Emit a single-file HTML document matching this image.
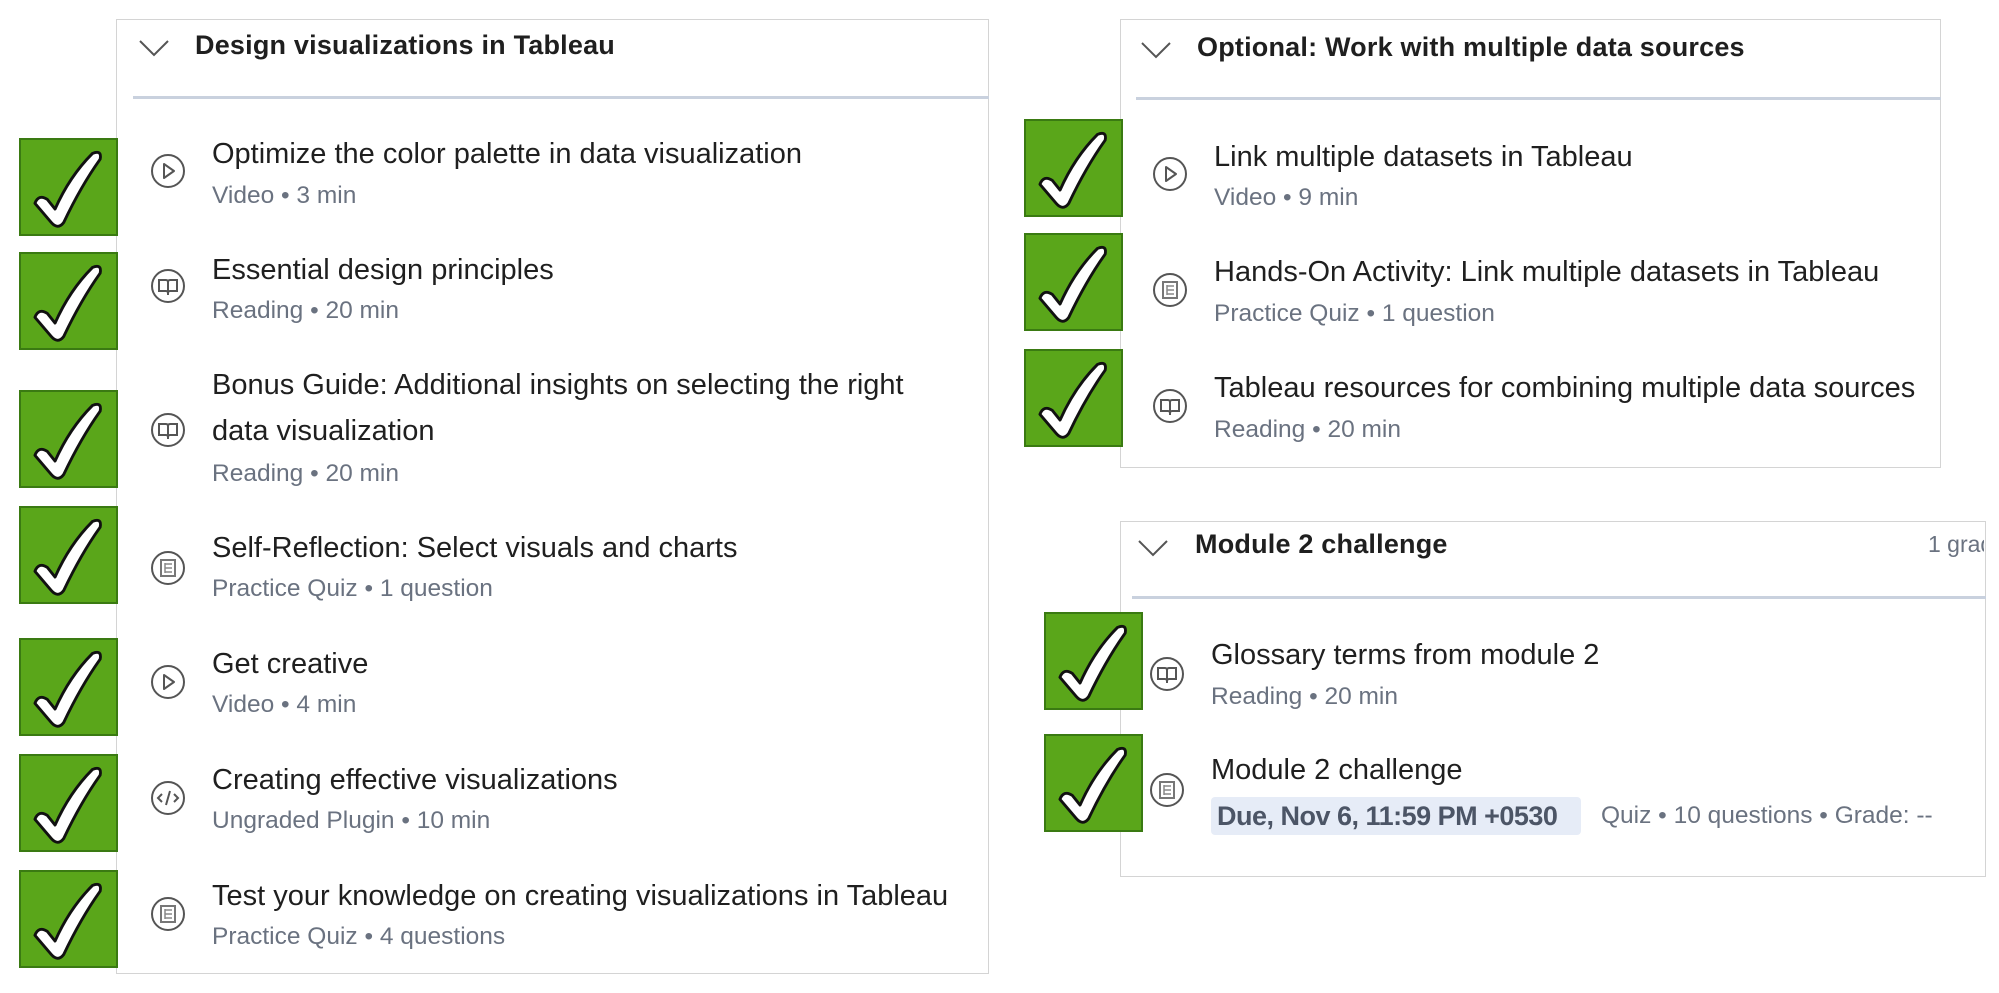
<!DOCTYPE html>
<html><head><meta charset="utf-8"><style>
*{margin:0;padding:0;box-sizing:border-box}
body{width:1999px;height:993px;background:#fff;position:relative;overflow:hidden;font-family:"Liberation Sans",sans-serif;color:#1f1f1f}
.a{position:absolute;white-space:nowrap}
.panel{position:absolute;border:1.5px solid #d4d4d4;background:#fff}
.sep{position:absolute;height:3px;background:#c9d1de}
.h{position:absolute;font-weight:bold;font-size:27px;color:#1f1f1f;white-space:nowrap;line-height:30px;letter-spacing:0.2px}
.t{position:absolute;font-size:29px;line-height:34px;white-space:nowrap;color:#1f1f1f;letter-spacing:0}
.s{position:absolute;font-size:24.5px;line-height:26px;white-space:nowrap;color:#6a7280;letter-spacing:0}
.cb{position:absolute;width:99px;height:98px;background:#5aa61a;border:2px solid #3a7a12}
.ic{position:absolute;width:36px;height:36px}
.chev{position:absolute;width:32px;height:20px}
.due{position:absolute;background:#e6ecf7;border-radius:4px;font-weight:bold;font-size:27px;color:#4c5566;line-height:38px;padding:0 6px;white-space:nowrap;letter-spacing:-0.5px}
</style></head><body>
<svg width="0" height="0" style="position:absolute">
<defs>
<symbol id="ck" viewBox="0 0 98 98"><path d="M14 66 Q18 56 27 62 L35 72 Q50 38 74 14 Q84 10 82 20 Q62 48 44 86 Q38 94 31 86 Z" fill="#fff" stroke="#111" stroke-width="3" stroke-linejoin="round"/></symbol>
<symbol id="play" viewBox="0 0 36 36"><circle cx="18" cy="18" r="16" fill="none" stroke="#555" stroke-width="2"/><path d="M14 11 L24 18 L14 25 Z" fill="none" stroke="#555" stroke-width="2" stroke-linejoin="round"/></symbol>
<symbol id="book" viewBox="0 0 36 36"><circle cx="18" cy="18" r="16" fill="none" stroke="#555" stroke-width="2"/><path d="M9 12 H16 Q18 12 18 14 Q18 12 20 12 H27 V23 H20 Q18 23 18 25 Q18 23 16 23 H9 Z M18 14 V27" fill="none" stroke="#555" stroke-width="2"/></symbol>
<symbol id="quiz" viewBox="0 0 36 36"><circle cx="18" cy="18" r="16" fill="none" stroke="#555" stroke-width="2"/><rect x="11" y="10" width="14" height="16" fill="none" stroke="#777" stroke-width="2"/><path d="M15 13 V23 M15 14 H22 M15 18 H22 M15 22 H22" stroke="#888" stroke-width="1.5"/></symbol>
<symbol id="code" viewBox="0 0 36 36"><circle cx="18" cy="18" r="16" fill="none" stroke="#555" stroke-width="2"/><path d="M12 14 L8 18 L12 22 M24 14 L28 18 L24 22 M20 11 L16 25" fill="none" stroke="#555" stroke-width="2"/></symbol>
<symbol id="chev" viewBox="0 0 32 20"><path d="M2 3 L16 17 L30 3" fill="none" stroke="#555" stroke-width="2"/></symbol>
</defs></svg>

<!-- Left panel -->
<div class="panel" style="left:116px;top:19px;width:873px;height:955px"></div>
<svg class="chev" style="left:138px;top:38px"><use href="#chev"/></svg>
<div class="h" style="left:195px;top:30px">Design visualizations in Tableau</div>
<div class="sep" style="left:133px;top:96px;width:856px"></div>

<svg class="cb" style="left:19px;top:138px"><use href="#ck"/></svg>
<svg class="cb" style="left:19px;top:252px"><use href="#ck"/></svg>
<svg class="cb" style="left:19px;top:390px"><use href="#ck"/></svg>
<svg class="cb" style="left:19px;top:506px"><use href="#ck"/></svg>
<svg class="cb" style="left:19px;top:638px"><use href="#ck"/></svg>
<svg class="cb" style="left:19px;top:754px"><use href="#ck"/></svg>
<svg class="cb" style="left:19px;top:870px"><use href="#ck"/></svg>

<svg class="ic" style="left:150px;top:153px"><use href="#play"/></svg>
<div class="t" style="left:212px;top:137px">Optimize the color palette in data visualization</div>
<div class="s" style="left:212px;top:183px">Video • 3 min</div>

<svg class="ic" style="left:150px;top:268px"><use href="#book"/></svg>
<div class="t" style="left:212px;top:253px">Essential design principles</div>
<div class="s" style="left:212px;top:298px">Reading • 20 min</div>

<svg class="ic" style="left:150px;top:412px"><use href="#book"/></svg>
<div class="t" style="left:212px;top:368px">Bonus Guide: Additional insights on selecting the right</div>
<div class="t" style="left:212px;top:414px">data visualization</div>
<div class="s" style="left:212px;top:461px">Reading • 20 min</div>

<svg class="ic" style="left:150px;top:550px"><use href="#quiz"/></svg>
<div class="t" style="left:212px;top:531px">Self-Reflection: Select visuals and charts</div>
<div class="s" style="left:212px;top:576px">Practice Quiz • 1 question</div>

<svg class="ic" style="left:150px;top:664px"><use href="#play"/></svg>
<div class="t" style="left:212px;top:647px">Get creative</div>
<div class="s" style="left:212px;top:692px">Video • 4 min</div>

<svg class="ic" style="left:150px;top:780px"><use href="#code"/></svg>
<div class="t" style="left:212px;top:763px">Creating effective visualizations</div>
<div class="s" style="left:212px;top:808px">Ungraded Plugin • 10 min</div>

<svg class="ic" style="left:150px;top:896px"><use href="#quiz"/></svg>
<div class="t" style="left:212px;top:879px">Test your knowledge on creating visualizations in Tableau</div>
<div class="s" style="left:212px;top:924px">Practice Quiz • 4 questions</div>

<!-- Right top panel -->
<div class="panel" style="left:1120px;top:19px;width:821px;height:449px"></div>
<svg class="chev" style="left:1140px;top:40px"><use href="#chev"/></svg>
<div class="h" style="left:1197px;top:32px">Optional: Work with multiple data sources</div>
<div class="sep" style="left:1136px;top:97px;width:805px"></div>

<svg class="cb" style="left:1024px;top:119px"><use href="#ck"/></svg>
<svg class="cb" style="left:1024px;top:233px"><use href="#ck"/></svg>
<svg class="cb" style="left:1024px;top:349px"><use href="#ck"/></svg>

<svg class="ic" style="left:1152px;top:156px"><use href="#play"/></svg>
<div class="t" style="left:1214px;top:140px">Link multiple datasets in Tableau</div>
<div class="s" style="left:1214px;top:185px">Video • 9 min</div>

<svg class="ic" style="left:1152px;top:272px"><use href="#quiz"/></svg>
<div class="t" style="left:1214px;top:255px">Hands-On Activity: Link multiple datasets in Tableau</div>
<div class="s" style="left:1214px;top:301px">Practice Quiz • 1 question</div>

<svg class="ic" style="left:1152px;top:388px"><use href="#book"/></svg>
<div class="t" style="left:1214px;top:371px">Tableau resources for combining multiple data sources</div>
<div class="s" style="left:1214px;top:417px">Reading • 20 min</div>

<!-- Right bottom panel -->
<div class="panel" style="left:1120px;top:521px;width:866px;height:356px"></div>
<svg class="chev" style="left:1137px;top:538px"><use href="#chev"/></svg>
<div class="h" style="left:1195px;top:529px">Module 2 challenge</div>
<div class="a" style="left:1928px;top:530px;font-size:23px;color:#6a7280;width:56px;overflow:hidden;line-height:28px">1 graded</div>
<div class="sep" style="left:1132px;top:596px;width:854px"></div>

<svg class="cb" style="left:1044px;top:612px"><use href="#ck"/></svg>
<svg class="cb" style="left:1044px;top:734px"><use href="#ck"/></svg>

<svg class="ic" style="left:1149px;top:656px"><use href="#book"/></svg>
<div class="t" style="left:1211px;top:638px">Glossary terms from module 2</div>
<div class="s" style="left:1211px;top:684px">Reading • 20 min</div>

<svg class="ic" style="left:1149px;top:772px"><use href="#quiz"/></svg>
<div class="t" style="left:1211px;top:753px">Module 2 challenge</div>
<div class="due" style="left:1211px;top:797px;width:370px">Due, Nov 6, 11:59 PM +0530</div>
<div class="s" style="left:1601px;top:803px">Quiz • 10 questions • Grade: --</div>
</body></html>
